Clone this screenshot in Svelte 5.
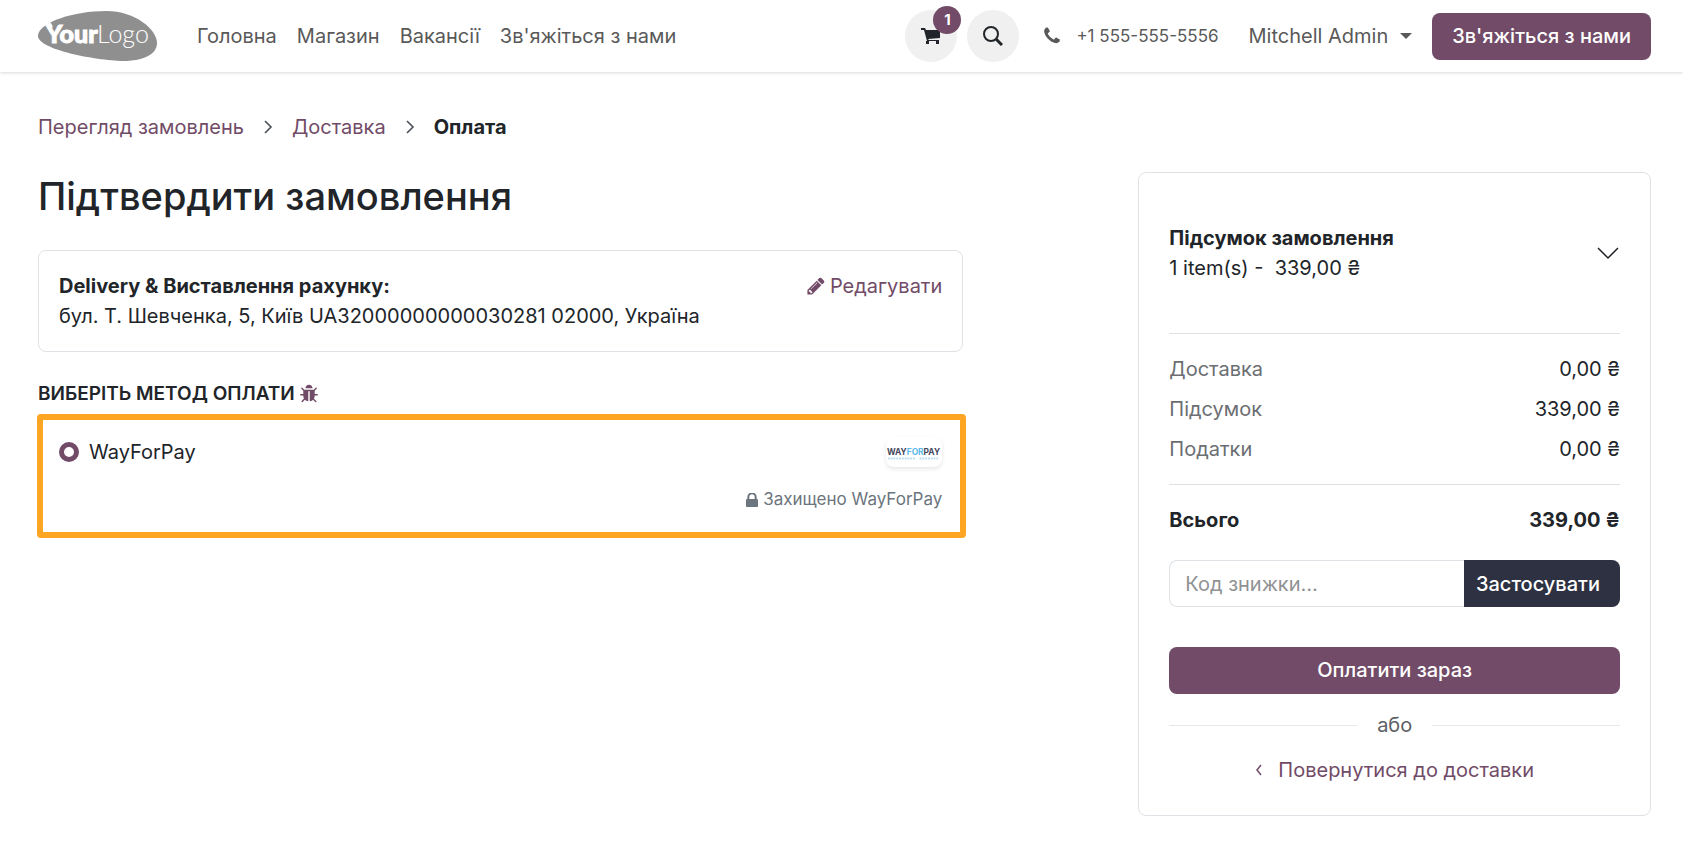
<script lang="ts">
    const menu = ['Головна', 'Магазин', 'Вакансії', "Зв'яжіться з нами"];

    const totals = [
        { label: 'Доставка', value: '0,00 ₴' },
        { label: 'Підсумок', value: '339,00 ₴' },
        { label: 'Податки', value: '0,00 ₴' },
    ];

    let method = 'wayforpay';
    let code = '';
</script>

<header>
    <a class="logo" href="/" aria-label="YourLogo">
        <svg width="120" height="52" viewBox="0 0 120 52">
            <path d="M0 25C2 12 36 1 68 1c30 0 51 19 51 32 0 12-15 18-34 18C55 50-2 39 0 25z" fill="#8f8f8f" />
            <path d="M4 14l9-1 2 4-5 2-1-3z" fill="#fff" />
            <text class="logo-bold" x="8" y="33">Your</text>
            <text class="logo-thin" x="59" y="33">Logo</text>
        </svg>
    </a>

    <nav>
        {#each menu as item}
            <a href="/">{item}</a>
        {/each}
    </nav>

    <div class="tools">
        <a class="circle" href="/shop/cart" aria-label="Cart">
            <svg width="20" height="18" viewBox="0 0 20 18" fill="#212529">
                <path d="M0 1h4l1 2h14v8L7 12l1 1h10v1H6L3 3H0z" />
                <path d="M5 14h3v3H5zM15 14h3v3h-3z" />
            </svg>
            <span class="badge">1</span>
        </a>
        <button class="circle" aria-label="Search">
            <svg width="20" height="20" viewBox="0 0 20 20" fill="none" stroke="#212529">
                <circle cx="8" cy="8" r="7" stroke-width="2" />
                <path d="M13 13l6 6" stroke-width="3" />
            </svg>
        </button>
    </div>

    <a class="phone" href="tel:+15555555556">
        <svg width="20" height="20" viewBox="0 0 1792 1792" fill="currentColor">
            <path d="M1600 1240q0 27-10 70.5t-21 68.5q-21 50-122 106-94 51-186 51-27 0-53-3.5t-57.5-12.5-47-14.5-55.5-20.5-49-18q-98-35-175-83-127-79-264-216t-216-264q-48-77-83-175-3-9-18-49t-20.5-55.5-14.5-47-12.5-57.5-3.5-53q0-92 51-186 56-101 106-122 25-11 68.5-21t70.5-10q14 0 21 3 18 6 53 76 11 19 30 54t35 63.5 31 53.5q3 4 17.5 25t21.5 35.5 7 28.5q0 20-28.5 50t-62 55-62 53-28.5 46q0 9 5 22.5t8.5 20.5 14 24 11.5 19q76 137 174 235t235 174q2 1 19 11.5t24 14 20.5 8.5 22.5 5q18 0 46-28.5t53-62 55-62 50-28.5q14 0 28.5 7t35.5 21.5 25 17.5q25 15 53.5 31t63.5 35 54 30q70 35 76 53 3 7 3 21z" />
        </svg>
        <span>+1 555-555-5556</span>
    </a>

    <button class="user">Mitchell Admin <span class="caret"></span></button>
    <a class="btn contact" href="/contactus">Зв'яжіться з нами</a>
</header>

<main>
    <div class="steps">
        <a href="/shop/cart">Перегляд замовлень</a>
        <svg width="10" height="14" viewBox="0 0 10 14"><path d="M2 1l6 6-6 6" /></svg>
        <a href="/shop/checkout">Доставка</a>
        <svg width="10" height="14" viewBox="0 0 10 14"><path d="M2 1l6 6-6 6" /></svg>
        <strong>Оплата</strong>
    </div>

    <div class="columns">
        <section>
            <h1>Підтвердити замовлення</h1>

            <div class="card address">
                <div>
                    <strong>Delivery &amp; Виставлення рахунку:</strong><br />
                    бул. Т. Шевченка, 5, Київ UA32000000000030281 02000, Україна
                </div>
                <a class="edit" href="/shop/checkout">
                    <svg width="20" height="20" viewBox="0 0 1792 1792" fill="currentColor">
                        <path d="M491 1536l91-91-235-235-91 91v107h128v128h107zm523-928q0-22-22-22-10 0-17 7l-542 542q-7 7-7 17 0 22 22 22 10 0 17-7l542-542q7-7 7-17zm-54-192l416 416-832 832h-416v-416zm683 96q0 53-37 90l-166 166-416-416 166-165q36-38 90-38 53 0 91 38l235 234q37 39 37 91z" />
                    </svg>
                    Редагувати
                </a>
            </div>

            <h2>
                ВИБЕРІТЬ МЕТОД ОПЛАТИ
                <a href="/web" aria-label="Debug">
                    <svg width="20" height="20" viewBox="0 0 1792 1792" fill="currentColor">
                        <path d="M1696 960q0 26-19 45t-45 19h-224q0 171-67 290l208 209q19 19 19 45t-19 45q-18 19-45 19t-45-19l-198-197q-5 5-15 13t-42 28.5-65 36.5-82 29-97 13v-896h-128v896q-51 0-101.5-13.5t-87-33-66-39-43.5-32.5l-15-14-183 207q-20 21-48 21-24 0-43-16-19-18-20.5-44.5t15.5-46.5l202-227q-58-114-58-274h-224q-26 0-45-19t-19-45 19-45 45-19h224v-294l-173-173q-19-19-19-45t19-45 45-19 45 19l173 173h844l173-173q19-19 45-19t45 19 19 45-19 45l-173 173v294h224q26 0 45 19t19 45zm-480-576h-640q0-133 93.5-226.5t226.5-93.5 226.5 93.5 93.5 226.5z" />
                    </svg>
                </a>
            </h2>

            <div class="method">
                <div class="method-row">
                    <label>
                        <input type="radio" name="method" value="wayforpay" bind:group={method} />
                        WayForPay
                    </label>
                    <svg class="provider" width="56" height="30" viewBox="0 0 60 32" aria-hidden="true">
                        <text x="1" y="19">WAY<tspan fill="#5bb8e8">FOR</tspan>PAY</text>
                        <path d="M2 23h30M36 23h21" stroke="#b9dff2" stroke-width="2" stroke-dasharray="2 1" />
                    </svg>
                </div>
                <div class="secured">
                    <svg width="12" height="14" viewBox="320 192 1152 1344" fill="currentColor">
                        <path d="M640 768h512v-192q0-106-75-181t-181-75-181 75-75 181v192zm832 96v576q0 40-28 68t-68 28h-960q-40 0-68-28t-28-68v-576q0-40 28-68t68-28h32v-192q0-184 132-316t316-132 316 132 132 316v192h32q40 0 68 28t28 68z" />
                    </svg>
                    Захищено WayForPay
                </div>
            </div>
        </section>

        <aside class="card summary">
            <button class="toggle">
                <span>
                    <strong>Підсумок замовлення</strong><br />
                    1 item(s) -&nbsp; 339,00 ₴
                </span>
                <svg width="24" height="14" viewBox="0 0 24 14"><path d="M2 2l10 10L22 2" /></svg>
            </button>

            <table>
                <tbody>
                    {#each totals as row}
                        <tr>
                            <th scope="row">{row.label}</th>
                            <td>{row.value}</td>
                        </tr>
                    {/each}
                </tbody>
                <tfoot>
                    <tr>
                        <th scope="row">Всього</th>
                        <td>339,00 ₴</td>
                    </tr>
                </tfoot>
            </table>

            <form class="promo" on:submit|preventDefault>
                <input type="text" bind:value={code} placeholder="Код знижки..." aria-label="Код знижки" />
                <button>Застосувати</button>
            </form>

            <button class="btn pay">Оплатити зараз</button>
            <div class="or"><span>або</span></div>
            <a class="back" href="/shop/checkout">
                <svg width="8" height="12" viewBox="0 0 8 12"><path d="M6 1L2 6l4 5" /></svg>
                Повернутися до доставки
            </a>
        </aside>
    </div>
</main>

<style>
    :global(body) {
        background: #fff;
        color: #212529;
        font: 20px/30px Inter, "Noto Sans", sans-serif;
    }

    a {
        color: #714b67;
        text-decoration: none;
    }

    button,
    input {
        font: inherit;
        color: inherit;
    }

    button {
        padding: 0;
        border: none;
        background: none;
        cursor: pointer;
    }

    strong {
        font-weight: 700;
    }

    svg {
        flex: none;
    }

    header {
        display: flex;
        align-items: center;
        height: 72px;
        padding: 0 32px 0 38px;
        box-shadow: 0 1px 3px rgba(0, 0, 0, 0.15);
    }

    .logo,
    .logo svg {
        display: block;
    }

    .logo text {
        fill: #fff;
        font-family: Lato, sans-serif;
        font-size: 25px;
    }

    .logo .logo-bold {
        font-weight: 900;
        stroke: #fff;
        stroke-width: 1;
    }

    .logo .logo-thin {
        font-weight: 300;
    }

    nav {
        display: flex;
        gap: 20px;
        margin: 0 auto 0 39px;
        white-space: nowrap;
    }

    nav a,
    .phone,
    .user {
        color: #595959;
        white-space: nowrap;
    }

    .tools {
        display: flex;
        gap: 10px;
    }

    .circle {
        position: relative;
        display: flex;
        align-items: center;
        justify-content: center;
        width: 52px;
        height: 52px;
        border-radius: 50%;
        background: #f0f0f0;
    }

    .badge {
        position: absolute;
        top: -4px;
        right: -4px;
        width: 28px;
        border-radius: 50%;
        background: #714b67;
        color: #fff;
        font-size: 15px;
        font-weight: 700;
        line-height: 28px;
        text-align: center;
    }

    .phone {
        display: flex;
        align-items: center;
        gap: 14px;
        margin: 0 30px 0 23px;
        font-size: 17px;
    }

    .user {
        display: flex;
        align-items: center;
        gap: 12px;
        margin-right: 20px;
    }

    .caret {
        border: 6px solid transparent;
        border-top-color: currentColor;
        border-bottom: none;
    }

    .btn {
        border-radius: 8px;
        background: #714b67;
        color: #fff;
        font-weight: 500;
        line-height: 47px;
        text-align: center;
        white-space: nowrap;
    }

    .contact {
        padding: 0 20px;
    }

    main {
        padding: 40px 32px 32px 38px;
    }

    .steps {
        display: flex;
        align-items: center;
        gap: 19px;
    }

    .steps svg {
        fill: none;
        stroke: #495057;
        stroke-width: 1.6;
    }

    .columns {
        display: grid;
        grid-template-columns: minmax(0, 74fr) minmax(0, 41fr);
        column-gap: 175px;
        align-items: start;
        margin-top: 30px;
    }

    h1 {
        margin: 0 0 30px;
        font-size: 38px;
        font-weight: 500;
        line-height: 48px;
    }

    .card {
        border: 1px solid #dee2e6;
        border-radius: 8px;
    }

    .address {
        display: flex;
        justify-content: space-between;
        padding: 20px;
    }

    .edit {
        display: flex;
        gap: 4px;
        height: 30px;
        align-items: center;
    }

    h2 {
        display: flex;
        align-items: center;
        gap: 4px;
        margin: 27px 0 5px;
        font-size: 19px;
        font-weight: 600;
        line-height: 30px;
    }

    h2 svg {
        display: block;
    }

    .method {
        margin: 0 -3px 0 -1px;
        padding: 17px 18px 20px 16px;
        border: 6px solid #ffa524;
        border-radius: 4px;
    }

    .method-row {
        display: flex;
        justify-content: space-between;
    }

    .method label {
        display: flex;
        align-items: center;
        gap: 10px;
    }

    .method input {
        appearance: none;
        width: 20px;
        height: 20px;
        margin: 0;
        border: 5px solid #714b67;
        border-radius: 50%;
        background: #fff;
    }

    .provider {
        border-radius: 8px;
        box-shadow: 0 2px 4px rgba(0, 0, 0, 0.1);
        fill: #45485c;
        font-size: 9px;
        font-weight: 700;
    }

    .secured {
        display: flex;
        align-items: center;
        justify-content: flex-end;
        gap: 5px;
        margin-top: 20px;
        color: #6c757d;
        font-size: 17px;
        line-height: 25px;
    }

    .summary {
        display: flex;
        flex-direction: column;
        padding: 20px 30px 30px;
    }

    .toggle {
        display: flex;
        align-items: center;
        justify-content: space-between;
        padding: 30px 0 50px;
        text-align: left;
    }

    .toggle svg,
    .back svg {
        fill: none;
        stroke: currentColor;
        stroke-width: 1.5;
    }

    table {
        border-collapse: collapse;
        border-top: 1px solid #dee2e6;
    }

    th,
    td {
        padding: 5px 0;
        text-align: right;
    }

    th {
        color: #6b6e72;
        font-weight: 400;
        text-align: left;
    }

    tbody tr:first-child > * {
        padding-top: 20px;
    }

    tbody tr:last-child > * {
        padding-bottom: 20px;
    }

    tfoot tr > * {
        padding: 20px 0 25px;
        border-top: 1px solid #dee2e6;
        color: #212529;
        font-weight: 700;
    }

    .promo {
        display: flex;
        height: 47px;
    }

    .promo input {
        flex: 1;
        min-width: 0;
        padding: 0 15px;
        border: 1px solid #dee2e6;
        border-right: none;
        border-radius: 8px 0 0 8px;
        outline: none;
    }

    .promo input::placeholder {
        color: #909294;
    }

    .promo button {
        padding: 0 20px 0 12px;
        border-radius: 0 8px 8px 0;
        background: #2d3142;
        color: #fff;
        font-weight: 500;
    }

    .pay {
        margin-top: 40px;
    }

    .or {
        display: flex;
        align-items: center;
        gap: 20px;
        margin: 16px 0 15px;
        color: #5c6064;
    }

    .or::before,
    .or::after {
        content: "";
        flex: 1;
        border-top: 1px solid #e6e8ea;
    }

    .back {
        display: flex;
        align-items: center;
        justify-content: center;
        gap: 15px;
    }
</style>
